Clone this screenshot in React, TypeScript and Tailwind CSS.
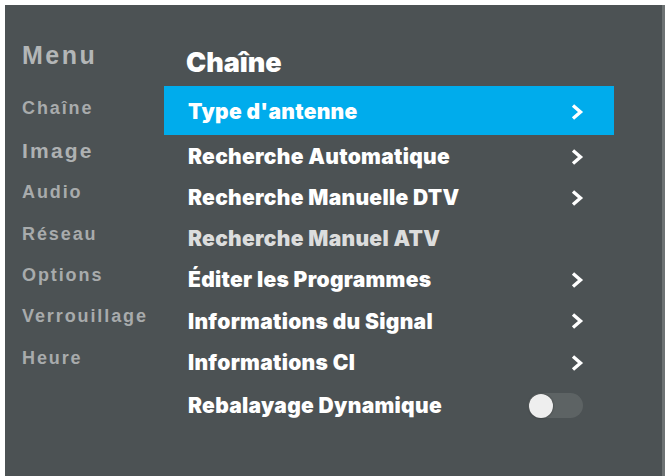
import { useState } from "react";

const sideItems = [
  { label: "Chaîne", big: false },
  { label: "Image", big: true },
  { label: "Audio", big: false },
  { label: "Réseau", big: false },
  { label: "Options", big: false },
  { label: "Verrouillage", big: false },
  { label: "Heure", big: false },
];

type Row = { label: string; kind: "arrow" | "none" | "toggle"; dim?: boolean };

const rows: Row[] = [
  { label: "Type d'antenne", kind: "arrow" },
  { label: "Recherche Automatique", kind: "arrow" },
  { label: "Recherche Manuelle DTV", kind: "arrow" },
  { label: "Recherche Manuel ATV", kind: "none", dim: true },
  { label: "Éditer les Programmes", kind: "arrow" },
  { label: "Informations du Signal", kind: "arrow" },
  { label: "Informations CI", kind: "arrow" },
  { label: "Rebalayage Dynamique", kind: "toggle" },
];

function Chevron() {
  return (
    <svg width="14" height="18" viewBox="0 0 14 18" className="text-white">
      <polyline points="3,2.5 10.5,9 3,15.5" fill="none" stroke="currentColor" strokeWidth="3.4" strokeLinejoin="miter" />
    </svg>
  );
}

export default function App() {
  const [active] = useState(0);
  const [rescan, setRescan] = useState(false);

  return (
    <div className="h-[476px] w-[665px] bg-white pl-[5px] pt-[5px] font-['Liberation_Sans',Arial,sans-serif]">
      <div className="flex h-full w-full border-r-[3px] border-[#6d7273] bg-[#4c5254]">
        {/* Left: main menu */}
        <aside className="w-[159px] shrink-0 pl-[17px] pt-[35px]">
          <div className="text-[25px] font-bold leading-[30px] tracking-[2.5px] text-[#b3b6b7]">Menu</div>
          <ul className="mt-[18px]">
            {sideItems.map((it) => (
              <li
                key={it.label}
                className={
                  it.big
                    ? "flex h-[43px] items-center text-[21px] font-bold tracking-[2.2px] text-[#aeb1b2]"
                    : "flex h-[41.3px] items-center text-[18px] font-bold tracking-[1.9px] text-[#a8abac]"
                }
              >
                {it.label}
              </li>
            ))}
          </ul>
        </aside>

        {/* Right: Chaîne submenu */}
        <section className="w-[450px] pt-[44px] font-['Inter',sans-serif]">
          <h1 className="pl-[22px] text-[27px] font-black leading-[28px] text-white">Chaîne</h1>
          <ul className="mt-[9px]">
            {rows.map((r, i) => (
              <li
                key={r.label}
                className={`flex items-center justify-between pl-[24px] pr-[30px] ${
                  i === active ? "h-[49px] bg-[#00acec] pt-[3px]" : "h-[41.2px]"
                } ${i === 1 ? "mt-[1px]" : ""} ${r.kind === "toggle" ? "mt-[2px]" : ""}`}
              >
                <span
                  className={`text-[21px] font-black tracking-[0.3px] ${r.dim ? "text-[#dcdddd]" : "text-white"}`}
                >
                  {r.label}
                </span>
                {r.kind === "arrow" && <Chevron />}
                {r.kind === "toggle" && (
                  <button
                    onClick={() => setRescan(!rescan)}
                    className="mr-[1px] flex h-[25px] w-[55px] items-center rounded-full bg-[#5d6364] px-[1px]"
                  >
                    <span className="h-[24px] w-[24px] rounded-full bg-[#eeeeee] shadow-[0_0_2px_rgba(0,0,0,0.5)]" />
                  </button>
                )}
              </li>
            ))}
          </ul>
        </section>
      </div>
    </div>
  );
}
